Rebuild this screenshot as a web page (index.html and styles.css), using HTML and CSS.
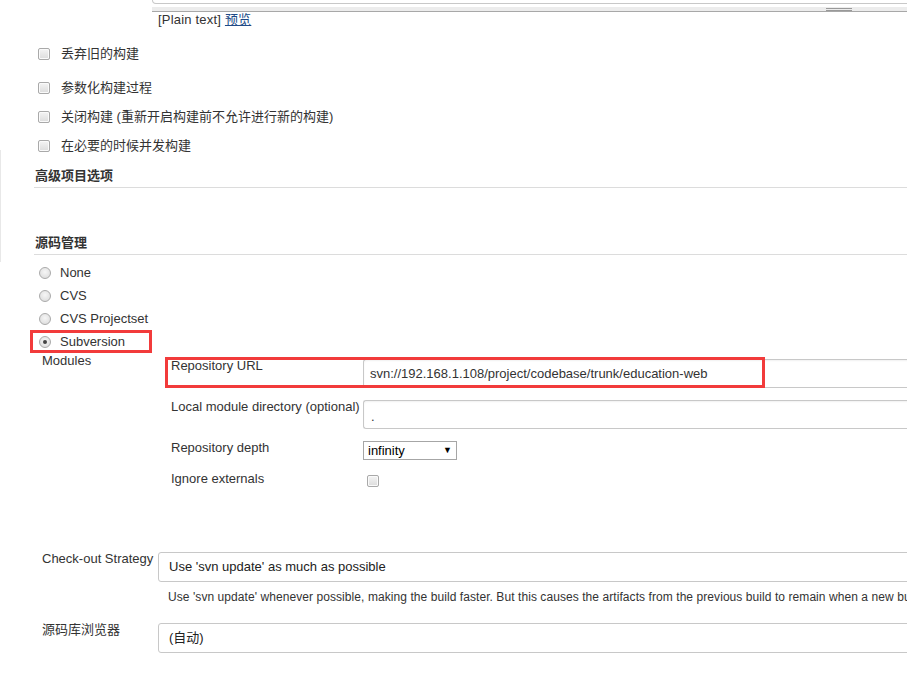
FILE: index.html
```html
<!DOCTYPE html>
<html>
<head>
  <meta charset="UTF-8">
  <title>Job config</title>
  <link rel="stylesheet" href="styles.css">
</head>
<body>
  <div class="side-line"></div>

  <div class="editor">
    <div class="editor-box"></div>
    <div class="grip-bar"><span class="grip"></span></div>
  </div>
  <div class="preview">[Plain text] <a href="#">预览</a></div>

  <div class="options">
    <label class="opt first"><span class="cb"></span>丢弃旧的构建</label>
    <label class="opt"><span class="cb"></span>参数化构建过程</label>
    <label class="opt"><span class="cb"></span>关闭构建 (重新开启构建前不允许进行新的构建)</label>
    <label class="opt"><span class="cb"></span>在必要的时候并发构建</label>
  </div>

  <div class="section-title advanced">高级项目选项</div>
  <div class="section-title scm">源码管理</div>

  <div class="radios">
    <label class="radio-row"><span class="rb"></span>None</label>
    <label class="radio-row"><span class="rb"></span>CVS</label>
    <label class="radio-row"><span class="rb"></span>CVS Projectset</label>
    <label class="radio-row marked"><span class="rb checked"></span>Subversion</label>
  </div>

  <div class="modules">
    <div class="modules-label">Modules</div>
    <div class="svn-table">
      <div class="svn-row marked">
        <div class="svn-label">Repository URL</div>
        <div class="text-box tall">svn://192.168.1.108/project/codebase/trunk/education-web</div>
      </div>
      <div class="svn-row">
        <div class="svn-label">Local module directory (optional)</div>
        <div class="text-box tall dot">.</div>
      </div>
      <div class="svn-row">
        <div class="svn-label">Repository depth</div>
        <div class="select-small">infinity<span class="arrow">▼</span></div>
      </div>
      <div class="svn-row">
        <div class="svn-label">Ignore externals</div>
        <div><span class="cb ignore"></span></div>
      </div>
    </div>
  </div>

  <div class="form-row checkout">
    <div class="form-label">Check-out Strategy</div>
    <div>
      <div class="wide-box">Use 'svn update' as much as possible</div>
      <div class="help">Use 'svn update' whenever possible, making the build faster. But this causes the artifacts from the previous build to remain when a new bu</div>
    </div>
  </div>

  <div class="form-row browser">
    <div class="form-label">源码库浏览器</div>
    <div class="wide-box">(自动)</div>
  </div>
</body>
</html>
```

FILE: styles.css
```css
body {
  margin: 0;
  width: 907px;
  height: 697px;
  overflow: hidden;
  position: relative;
  font-family: "Liberation Sans", Arial, "Noto Sans CJK SC", sans-serif;
  font-size: 13px;
  line-height: 16px;
  color: #333;
  background: #fff;
}

.side-line {
  position: absolute;
  left: 0;
  top: 150px;
  width: 1px;
  height: 112px;
  background: #e8e8e8;
}

/* textarea tail + resize grip */
.editor {
  margin-left: 152px;
  width: 800px;
}

.editor-box {
  height: 3px;
  border: 1px solid #c8c8c8;
  border-top: none;
  border-radius: 0 0 4px 4px;
}

.grip-bar {
  margin-top: 3px;
  height: 4px;
  background: #ececec;
  border-bottom: 1px solid #a8a8a8;
  display: flex;
  align-items: center;
}

.grip {
  margin-left: 674px;
  width: 26px;
  height: 1px;
  border-top: 1px solid #999;
  border-bottom: 1px solid #999;
}

.preview {
  padding-left: 158px;
  margin-top: 1px;
  line-height: 14px;
  letter-spacing: 0.2px;
}

.preview a {
  color: #204a87;
}

/* checkbox options */
.options {
  margin-top: 16px;
  display: flex;
  flex-direction: column;
  gap: 7px;
}

.opt {
  display: flex;
  align-items: center;
  height: 22px;
  padding-left: 38px;
  gap: 11px;
}

.opt.first {
  margin-bottom: 5px;
}

.cb {
  display: inline-block;
  width: 10px;
  height: 10px;
  border: 1px solid #a9a9a9;
  border-radius: 2px;
  background: linear-gradient(#f4f4f4, #dcdcdc);
  box-shadow: inset 0 0 0 1px #fafafa;
}

.section-title {
  margin-left: 34px;
  font-weight: bold;
  padding-left: 1px;
  padding-bottom: 3px;
  border-bottom: 1px solid #dcdcdc;
}

.advanced {
  margin-top: 11px;
}

.scm {
  margin-top: 47px;
}

/* radio list */
.radios {
  margin-top: 6px;
}

.radio-row {
  display: flex;
  align-items: center;
  width: 113px;
  height: 23px;
  margin-left: 30px;
  padding-left: 9px;
  gap: 9px;
}

.radio-row.marked {
  outline: 3px solid #f23b3b;
  outline-offset: -3px;
}

.rb {
  display: inline-block;
  width: 10px;
  height: 10px;
  border: 1px solid #aaa;
  border-radius: 50%;
  background: radial-gradient(circle at 50% 40%, #f6f6f6, #d8d8d8);
  position: relative;
}

.rb.checked::after {
  content: "";
  position: absolute;
  left: 3px;
  top: 3px;
  width: 4px;
  height: 4px;
  border-radius: 50%;
  background: #444;
}

/* subversion module */
.modules {
  display: flex;
  padding-left: 42px;
}

.modules-label {
  width: 123px;
  flex: none;
}

.svn-table {
  flex: 1;
  padding-top: 5px;
  display: flex;
  flex-direction: column;
  gap: 11px;
}

.svn-row {
  display: grid;
  grid-template-columns: 198px 1fr;
  align-items: start;
  position: relative;
}

.svn-row.marked::after {
  content: "";
  position: absolute;
  left: 0;
  top: -1px;
  width: 594px;
  height: 25px;
  border: 3px solid #f23b3b;
}

.svn-label {
  padding-left: 6px;
}

.text-box {
  margin-top: 1px;
  height: 27px;
  width: 600px;
  border: 1px solid #c8c8c8;
  border-right: none;
  border-radius: 3px 0 0 3px;
  box-shadow: inset 0 1px 2px rgba(0, 0, 0, 0.06);
  padding-left: 6px;
  line-height: 27px;
}

.text-box.dot {
  line-height: 32px;
  padding-left: 7px;
}

.select-small {
  margin-top: 1px;
  width: 84px;
  height: 17px;
  border: 1px solid #a6a6a6;
  padding-left: 4px;
  padding-right: 4px;
  line-height: 17px;
  display: flex;
  justify-content: space-between;
  color: #000;
}

.arrow {
  font-size: 9px;
}

.cb.ignore {
  margin-top: 4px;
  margin-left: 4px;
}

/* lower form rows */
.form-row {
  display: grid;
  grid-template-columns: 116px 1fr;
  padding-left: 42px;
  align-items: start;
}

.checkout {
  margin-top: 60px;
}

.browser {
  margin-top: 17px;
}

.wide-box {
  margin-top: 1px;
  height: 28px;
  width: 800px;
  border: 1px solid #c8c8c8;
  border-radius: 3px 0 0 3px;
  padding-left: 10px;
  line-height: 28px;
  color: #222;
}

.help {
  margin-top: 7px;
  padding-left: 10px;
  font-size: 12px;
  letter-spacing: 0.07px;
  white-space: nowrap;
}
```
